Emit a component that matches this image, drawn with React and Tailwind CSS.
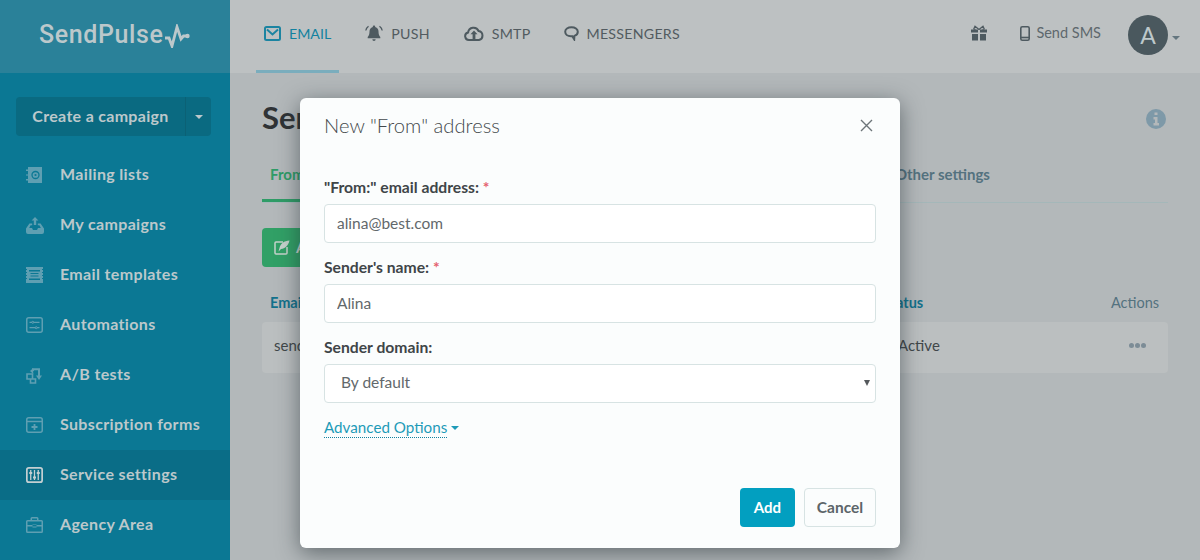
const font = { fontFamily: '"Lato", "Noto Sans", sans-serif' };

function MailingIcon() {
  return (
    <svg width="16" height="16" viewBox="0 0 16 16" fill="#5f9fb2">
      <path d="M2 0h14v16H2z" />
      <path d="M0 2.500h3.500v1.500H0zM0 7.250h3.500v1.500H0zM0 12h3.500v1.500H0z" />
      <path d="M0 4h2v3.250H0zM0 8.750h2V12H0z" fill="#0b7894" />
      <circle cx="9.500" cy="8" r="3.500" fill="none" stroke="#0b7894" strokeWidth="1.300" />
      <circle cx="9.500" cy="8" r="1.100" fill="#0b7894" />
    </svg>
  );
}

function CampaignsIcon() {
  return (
    <svg width="18" height="17" viewBox="0 0 18 17" fill="#5f9fb2">
      <path d="M9 0l3.400 3.600h-2.200V8H7.800V3.600H5.600z" />
      <path d="M3.400 6.500h2.800v1.800H4.600L3.200 11H6l1 2h4l1-2h2.800l-1.400-2.700h-1.600V6.500h2.800L18 11.500V15a2 2 0 0 1-2 2H2a2 2 0 0 1-2-2v-3.500z" />
    </svg>
  );
}

function TemplatesIcon() {
  return (
    <svg width="17" height="16" viewBox="0 0 17 16" fill="#5f9fb2">
      <path d="M0 0h17v16H0z" />
      <path d="M3 3h11v1.400H3zM4.500 6h8v1h-8zM4.500 8.500h8v1h-8zM3 11.500h11v1.400H3z" fill="#0b7894" />
      <path d="M0 2h1v1H0zM0 5h1v1H0zM0 8h1v1H0zM0 11h1v1H0zM16 2h1v1h-1zM16 5h1v1h-1zM16 8h1v1h-1zM16 11h1v1h-1z" fill="#0b7894" />
    </svg>
  );
}

function AutomationsIcon() {
  return (
    <svg width="17" height="16" viewBox="0 0 17 16" fill="none" stroke="#5f9fb2" strokeWidth="1.500">
      <rect x=".75" y=".75" width="15.500" height="14.500" rx="2" />
      <path d="M3.500 5.300h2.500M7.500 5.300h6M3.500 10.700h6M11 10.700h2.500" strokeWidth="1.200" />
      <circle cx="6.800" cy="5.300" r="1" strokeWidth="1" />
      <circle cx="10.200" cy="10.700" r="1" strokeWidth="1" />
    </svg>
  );
}

function AbIcon() {
  return (
    <svg width="17" height="17" viewBox="0 0 17 17" fill="none" stroke="#5f9fb2" strokeWidth="1.600">
      <path d="M1 7h5.500v5H1zM4.500 12v4h5v-4H6.500" />
      <path d="M7 4V2.300h6V9" strokeWidth="2" />
      <path d="M4 4l3.200-3v6zM10 8.500h6L13 13z" fill="#5f9fb2" stroke="none" />
    </svg>
  );
}

function FormsIcon() {
  return (
    <svg width="17" height="16" viewBox="0 0 17 16" fill="none" stroke="#5f9fb2" strokeWidth="1.500">
      <rect x=".75" y=".75" width="15.500" height="14.500" rx="2" />
      <path d="M1 4.500h15" />
      <path d="M8.500 7v6M5.500 10h6" strokeWidth="1.800" />
    </svg>
  );
}

function SettingsIcon() {
  return (
    <svg width="17" height="16" viewBox="0 0 17 16" fill="none" stroke="#c4cfd2" strokeWidth="1.700">
      <rect x=".85" y=".85" width="15.300" height="14.300" rx="2" />
      <path d="M4.750 3v10M8.500 3v10M12.250 3v10" strokeWidth="1.300" />
      <path d="M3.250 6h3M7 10.500h3M10.750 6h3" strokeWidth="2.200" />
    </svg>
  );
}

function AgencyIcon() {
  return (
    <svg width="17" height="16" viewBox="0 0 17 16" fill="#5f9fb2">
      <path d="M6 0h5a1.500 1.500 0 0 1 1.500 1.500V3h3A1.500 1.500 0 0 1 17 4.500v10a1.500 1.500 0 0 1-1.500 1.500h-14A1.500 1.500 0 0 1 0 14.500v-10A1.500 1.500 0 0 1 1.500 3h3V1.500A1.500 1.500 0 0 1 6 0zm0 1.500V3h5V1.500zM1.500 4.500V8h14V4.500zm0 5v5h14v-5zM6.500 7.500h4v3h-4z" fillRule="evenodd" />
    </svg>
  );
}

function EmailIcon() {
  return (
    <svg width="17" height="15" viewBox="0 0 17 15" fill="none" stroke="#1b84a1" strokeWidth="2">
      <rect x="1" y="1" width="15" height="13" rx="1.500" />
      <path d="M3 3.500l5.500 5 5.500-5" />
    </svg>
  );
}

function BellIcon() {
  return (
    <svg width="18" height="17" viewBox="0 0 18 17" fill="#4e5a60">
      <path d="M9 .5a1.200 1.200 0 0 1 1.200 1.400c2.300.6 3.300 2.400 3.300 4.600 0 2.800.6 4.300 1.800 5.500v1.300H2.700V12c1.200-1.200 1.800-2.700 1.800-5.500 0-2.200 1-4 3.300-4.600A1.200 1.200 0 0 1 9 .5zM7.300 14.300h3.400a1.700 1.700 0 0 1-3.400 0z" />
      <path d="M3.500 1.200C2 2.300 1.100 3.700.8 5.500M14.500 1.200c1.500 1.100 2.400 2.500 2.700 4.300" fill="none" stroke="#4e5a60" strokeWidth="1.300" />
    </svg>
  );
}

function CloudIcon() {
  return (
    <svg width="20" height="15" viewBox="0 0 20 15" fill="none" stroke="#4e5a60" strokeWidth="2">
      <path d="M5 14a3.800 3.800 0 0 1-.9-7.500A5.500 5.500 0 0 1 14.600 5 4.600 4.600 0 0 1 15 14z" />
      <path d="M10 4.500l3.500 3.700h-2.100v4.800H8.600V8.200H6.500z" fill="#4e5a60" stroke="none" />
    </svg>
  );
}

function ChatIcon() {
  return (
    <svg width="15" height="15" viewBox="0 0 15 15" fill="none" stroke="#4e5a60" strokeWidth="2">
      <path d="M7.500 1.200C3.900 1.200 1.200 3.100 1.200 5.800c0 2.600 2.400 4.500 5.800 4.500h1.300l1.900 3 .2-3.400c2.200-.7 3.400-2.300 3.400-4.100 0-2.700-2.700-4.600-6.300-4.600z" />
    </svg>
  );
}

function GiftIcon() {
  return (
    <svg width="16" height="16" viewBox="0 0 16 16" fill="#4e5a60" className="mb-[4px]">
      <path d="M0 4.500h7v3H0zM9 4.500h7v3H9zM1 9h6v6.500H1zM9 9h6v6.500H9z" />
      <path d="M8 4.500L4 1.200 2.800 3.800 4.500 4.500M8 4.500l4-3.300 1.200 2.600-1.700.7" fill="none" stroke="#4e5a60" strokeWidth="1.300" />
    </svg>
  );
}

function PhoneIcon() {
  return (
    <svg width="10" height="15" viewBox="0 0 10 15" fill="none" stroke="#4e5a60" strokeWidth="1.600">
      <rect x=".8" y=".8" width="8.400" height="13.400" rx="1.500" />
      <path d="M1 11.500h8" strokeWidth="1.600" />
    </svg>
  );
}

function EditIcon() {
  return (
    <svg width="16" height="15" viewBox="0 0 16 15" fill="none" stroke="#c5d2cc" strokeWidth="1.500">
      <path d="M9 2H2a1 1 0 0 0-1 1v10a1 1 0 0 0 1 1h10a1 1 0 0 0 1-1V7" />
      <path d="M15.500.5C10 .8 6.500 3.500 5.500 8l-1 3.500L7 9c4-.5 7.500-3.500 8.500-8.500z" fill="#c5d2cc" stroke="none" />
    </svg>
  );
}

function Caret({ className }) {
  return <span className={`inline-block border-x-[4px] border-t-[4px] border-x-transparent ${className}`} />;
}

function SideItem({ icon, label, active }) {
  return (
    <div className={`flex h-[50px] items-center pl-[26px] ${active ? "bg-[#0a6d87]" : ""}`}>
      <span className="flex w-[34px] items-center">{icon}</span>
      <span className="pb-[2px] text-[16px] font-bold tracking-[0.35px] text-[#bcc8cb]">{label}</span>
    </div>
  );
}

function TopLink({ icon, label, active }) {
  return (
    <div
      className={`flex h-[73px] items-center gap-2 border-b-[3px] px-2 pb-[2px] text-[14.200px] ${
        active ? "border-[#7aadbd] text-[#12819f]" : "border-transparent tracking-[0.25px] text-[#525b60]"
      }`}
    >
      <span className="mb-[2px] flex">{icon}</span>
      <span>{label}</span>
    </div>
  );
}

function Field({ label, required, children }) {
  return (
    <div>
      <div className="mb-[5px] h-[21px] text-[15.700px] font-bold leading-[19px] text-[#3f4548]">
        {label} {required && <span className="text-[#e4606d]">*</span>}
      </div>
      {children}
    </div>
  );
}

function TextInput({ value }) {
  return (
    <input
      readOnly
      value={value}
      style={font}
      className="block h-[39px] w-full rounded-[4px] border border-[#d7e3e3] bg-white px-3 pb-[2px] text-[15.500px] text-[#62686b] outline-none"
    />
  );
}

function Modal() {
  return (
    <div className="absolute left-[300px] top-[98px] flex h-[450px] w-[600px] flex-col rounded-[6px] bg-[#fbfdfd] shadow-[0_5px_22px_rgba(30,40,45,0.55)]">
      <div className="flex h-[57px] items-center justify-between pb-[3px] pl-6 pr-[27px]">
        <h2 className="text-[20.200px] font-light text-[#43494c]">New "From" address</h2>
        <svg width="13" height="13" viewBox="0 0 13 13" stroke="#6d7579" strokeWidth="1.400">
          <path d="M1 1l11 11M12 1L1 12" />
        </svg>
      </div>
      <div className="flex flex-col px-6 pt-[23px]">
        <Field label={'"From:" email address:'} required>
          <TextInput value="alina@best.com" />
        </Field>
        <div className="mt-[15px]">
          <Field label="Sender's name:" required>
            <TextInput value="Alina" />
          </Field>
        </div>
        <div className="mt-[15px]">
          <Field label="Sender domain:">
            <div className="relative flex h-[39px] items-center rounded-[4px] border border-[#d7e3e3] bg-white pb-[1px] pl-4 text-[15.500px] text-[#62686b]">
              By default
              <span className="absolute right-[5px] top-[15px] border-x-[3.500px] border-t-[6px] border-x-transparent border-t-[#55595c]" />
            </div>
          </Field>
        </div>
        <div className="mt-[14px] flex items-center gap-[4px]">
          <span className="h-[21px] border-b border-dotted border-[#12819f] text-[15.200px] leading-[21px] text-[#1e9bb8]">
            Advanced Options
          </span>
          <Caret className="border-t-[#1e9bb8]" />
        </div>
      </div>
      <div className="mt-auto flex justify-end gap-[9px] px-6 pb-[21px]">
        <button className="h-[39px] w-[55px] rounded-[4px] bg-[#029fc0] text-[15px] font-bold text-white">Add</button>
        <button className="h-[39px] w-[72px] rounded-[4px] border border-[#d7e3e3] bg-[#fbfdfd] text-[15.500px] font-bold text-[#5c6569]">
          Cancel
        </button>
      </div>
    </div>
  );
}

export default function App() {
  const menu = [
    [<MailingIcon />, "Mailing lists"],
    [<CampaignsIcon />, "My campaigns"],
    [<TemplatesIcon />, "Email templates"],
    [<AutomationsIcon />, "Automations"],
    [<AbIcon />, "A/B tests"],
    [<FormsIcon />, "Subscription forms"],
    [<SettingsIcon />, "Service settings", true],
    [<AgencyIcon />, "Agency Area"],
  ];

  return (
    <div style={font} className="relative flex h-[560px] w-[1200px] overflow-hidden bg-[#b3b8ba]">
      <aside className="h-full w-[230px] shrink-0 bg-[#0b7894]">
        <div className="flex h-[73px] items-center gap-[1px] bg-[#2a8199] pb-[3px] pl-[39px]">
          <span className="text-[25px] font-medium tracking-[0.6px] text-[#bcc8cb]" style={{ fontFamily: "Roboto, sans-serif" }}>
            SendPulse
          </span>
          <svg width="26" height="24" viewBox="0 0 26 24" fill="none" stroke="#bcc8cb" strokeWidth="2.800" className="mt-[2px]">
            <path d="M1 14h4l3 8 5-19 4 12 2.500-3H23" />
            <circle cx="23.500" cy="12" r="2.200" fill="#bcc8cb" stroke="none" />
          </svg>
        </div>
        <div className="mx-4 mb-[14px] mt-6 flex h-[39px] w-[195px] rounded-[4px] bg-[#0a6a81] text-[16px] font-bold tracking-[0.3px] text-[#bcc8cb]">
          <div className="flex flex-1 items-center justify-center border-r border-[#0b6175] pb-[2px]">Create a campaign</div>
          <div className="flex w-[25px] items-center justify-center">
            <Caret className="border-t-[#bcc8cb]" />
          </div>
        </div>
        {menu.map(([icon, label, active]) => (
          <SideItem key={label} icon={icon} label={label} active={active} />
        ))}
      </aside>

      <main className="flex min-w-0 flex-1 flex-col">
        <header className="flex h-[73px] items-center bg-[#bdc1c2] pl-[26px] pr-[20px]">
          <TopLink icon={<EmailIcon />} label="EMAIL" active />
          <div className="ml-[18px]">
            <TopLink icon={<BellIcon />} label="PUSH" />
          </div>
          <div className="ml-[18px]">
            <TopLink icon={<CloudIcon />} label="SMTP" />
          </div>
          <div className="ml-[17px]">
            <TopLink icon={<ChatIcon />} label="MESSENGERS" />
          </div>
          <div className="ml-auto flex items-center pb-[3px]">
            <GiftIcon />
            <div className="ml-[33px] flex items-center gap-[6px] pb-[4px] text-[14.500px] text-[#5e686d]">
              <PhoneIcon />
              Send SMS
            </div>
            <div className="ml-[27px] flex h-10 w-10 items-center justify-center rounded-full bg-[#4a585e] text-[23px] text-[#bdc8cb]">A</div>
            <Caret className="ml-[4px] mt-[5px] border-t-[#64767f]" />
          </div>
        </header>

        <section className="flex flex-1 flex-col pl-8 pr-8">
          <div className="mt-[21px] flex items-center justify-between">
            <h1 className="text-[31px] font-bold leading-[46px] text-[#2f3336]">Service settings</h1>
            <svg width="20" height="20" viewBox="0 0 20 20" className="mr-[2px] mt-[4px]">
              <circle cx="10" cy="10" r="10" fill="#7e99a8" />
              <path d="M8.500 3.500h3v2.500h-3zM7.500 8h4v6h1.500v2.500H7.500V14H9v-3.500H7.500z" fill="#b3b8ba" />
            </svg>
          </div>
          <div className="mt-[10px] flex h-[53px] items-start gap-[30px] border-b border-[#a4b7b9] text-[15px] font-bold text-[#54727f]">
            <span className="flex h-[52px] items-start border-b-[3px] border-[#2f9c67] px-2 pt-[13px] text-[#2f9c67]">From addresses</span>
            <span className="ml-[483px] pt-[13px]">Other settings</span>
          </div>
          <div className="mt-[25px]">
            <button className="flex h-[39px] items-center gap-[6px] rounded-[4px] bg-[#31a066] px-3 text-[15px] font-bold text-[#c5d2cc]">
              <EditIcon />
              Add address
            </button>
          </div>
          <div className="mt-[25px] grid grid-cols-[1fr_228px_49px] px-2 text-[14.500px]">
            <span className="font-bold text-[#12718c]">Email</span>
            <span className="font-bold text-[#12718c]">Status</span>
            <span className="text-[#54727f]">Actions</span>
          </div>
          <div className="mt-[8px] grid h-[51px] grid-cols-[1fr_228px_30px] items-center rounded-[4px] bg-[#bbbfc0] px-3 pb-[4px] text-[15px] text-[#41474a]">
            <span>sender@best.com</span>
            <span>Active</span>
            <span className="flex gap-[1px] pl-[3px]">
              <i className="h-[5px] w-[5px] rounded-full bg-[#7c8c96]" />
              <i className="h-[5px] w-[5px] rounded-full bg-[#7c8c96]" />
              <i className="h-[5px] w-[5px] rounded-full bg-[#7c8c96]" />
            </span>
          </div>
        </section>
      </main>

      <Modal />
    </div>
  );
}
